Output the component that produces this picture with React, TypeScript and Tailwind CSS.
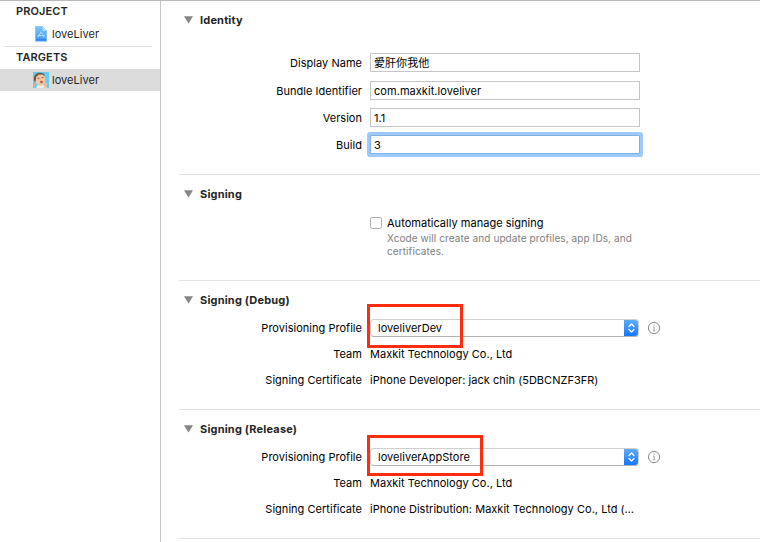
import type { ReactNode } from 'react';

function Section({ title, className, children }: { title: string; className: string; children: ReactNode }) {
  return (
    <section className={`flex flex-col border-b border-[#e3e3e3] ${className}`}>
      <h2 className="flex h-[18px] shrink-0 items-center pl-[5px] font-bold tracking-[0.18px] text-[#262626]">
        <svg className="mr-[7px] h-2 w-[9px]" viewBox="0 0 9 8">
          <path d="M0 0.3H9L4.5 7.6Z" fill="#868686" />
        </svg>
        {title}
      </h2>
      {children}
    </section>
  );
}

function Row({ label, className, children }: { label: string; className: string; children: ReactNode }) {
  return (
    <div className={`flex shrink-0 items-center ${className}`}>
      <div className="mr-2 w-[183px] shrink-0 text-right">{label}</div>
      {children}
    </div>
  );
}

function Field({ value, focused }: { value: string; focused?: boolean }) {
  return (
    <div
      className={`flex h-[19px] w-[270px] items-center border bg-white pl-[3px] tracking-[0.05px] ${
        focused ? 'rounded-[1px] border-[#7fb0e6] shadow-[0_0_0_3px_#9dcafb]' : 'border-[#c5c5c5]'
      }`}
    >
      {value}
    </div>
  );
}

function ProfileSelect({ value, mark }: { value: string; mark: string }) {
  return (
    <div className="relative flex items-center">
      <div className="flex h-[18px] w-[269px] items-center overflow-hidden rounded-[4px] border border-[#cfcfcf] border-b-[#b3b3b3] pl-[7px]">
        <span className="flex-1">{value}</span>
        <span className="-my-px -mr-px flex h-[18px] w-[15px] items-center justify-center bg-gradient-to-b from-[#63aefb] to-[#0a73fb]">
          <svg className="h-[10px] w-[7px]" viewBox="0 0 7 10" fill="none" stroke="#fff" strokeWidth="1.2" strokeLinecap="round" strokeLinejoin="round">
            <path d="M1 3.5 3.5 1 6 3.5M1 6.5 3.5 9 6 6.5" />
          </svg>
        </span>
      </div>
      <svg className="ml-2 h-[14px] w-[14px]" viewBox="0 0 14 14" fill="none">
        <circle cx="7" cy="7" r="5.6" stroke="#8b8b8b" />
        <path d="M6.2 6H7.1V9.8M6 9.8H8.2" stroke="#8b8b8b" strokeWidth="0.8" />
        <circle cx="7" cy="4.1" r="0.7" fill="#8b8b8b" />
      </svg>
      <div className={`absolute -left-[3px] border-3 border-[#ff2d10] ${mark}`} />
    </div>
  );
}

function DocumentIcon() {
  return (
    <svg className="mr-[5px] h-4 w-3" viewBox="0 0 12 16">
      <defs>
        <linearGradient id="doc" x1="0" y1="0" x2="0" y2="1">
          <stop offset="0" stopColor="#7cc5fb" />
          <stop offset="1" stopColor="#3f98f3" />
        </linearGradient>
      </defs>
      <path d="M0.4 0.5H7.6L11.7 4.8V15.3H0.4Z" fill="url(#doc)" stroke="#75b8ed" strokeWidth="0.6" />
      <path d="M7.6 0.5V4.8H11.7Z" fill="#c3e6ff" />
      <path d="M3 11.3 6.1 5.8 9.2 11.3M2.4 9.6H9.8" fill="none" stroke="#a9ddff" strokeWidth="1" />
      <path d="M1 13.8H11" stroke="#2784e8" strokeWidth="1.2" />
    </svg>
  );
}

function FaceIcon() {
  return (
    <svg className="mr-[3px] h-4 w-4" viewBox="0 0 16 16">
      <rect width="16" height="16" fill="#62cdf4" />
      <path d="M3 16 5 12.5 11 13 14 16Z" fill="#e9eff0" />
      <ellipse cx="7.2" cy="7.8" rx="5.2" ry="6.2" transform="rotate(-12 7.2 7.8)" fill="#f3c6a4" />
      <path d="M1.4 9.5C-0.2 4.5 2.6 0.7 6.8 0.8 10 0.8 11.4 2 11.9 4L9.3 2.5 5.4 2.7 3.2 4.9 2.7 9.6Z" fill="#79523a" />
      <path d="M4.5 6.6 6.5 6.1M8.7 5.5 10.5 5.7" stroke="#6b4a3b" strokeWidth="0.8" />
      <path d="M7 6.8 7.6 8.2" stroke="#d89b78" strokeWidth="0.8" />
      <ellipse cx="8.5" cy="10" rx="1.6" ry="1.2" fill="#bd6555" />
      <path d="M10.2 15.8 12.2 10.8 14.2 11.4 13.3 15.8Z" fill="#f2bd9a" />
      <path d="M1 11 3 12.6 2.6 15 1 14Z" fill="#e9ad89" />
    </svg>
  );
}

function Signing({ title, profile, mark, certificate }: { title: string; profile: string; mark: string; certificate: string }) {
  return (
    <Section title={title} className="h-[129px] pt-[10px]">
      <Row label="Provisioning Profile" className="mt-[10px] h-[18px]">
        <ProfileSelect value={profile} mark={mark} />
      </Row>
      <Row label="Team" className="mt-2 h-[18px]">Maxkit Technology Co., Ltd</Row>
      <Row label="Signing Certificate" className="mt-2 h-[18px]">{certificate}</Row>
    </Section>
  );
}

export default function App() {
  return (
    <div className="flex h-[542px] w-[760px] overflow-hidden border-t border-[#b9b9b9] bg-white font-['Inter','Noto_Sans_CJK_TC',sans-serif] text-[11px] leading-[14px] tracking-[0.025px] whitespace-nowrap text-black">
      <aside className="flex w-[161px] shrink-0 flex-col border-r border-[#c6c6c6] text-[#262626]">
        <div className="flex h-[20px] items-center pl-4 font-semibold tracking-[0.1px]">PROJECT</div>
        <div className="flex h-[25px] items-center pl-[35px]"><DocumentIcon />loveLiver</div>
        <div className="mr-2 ml-[5px] h-px bg-[#dedede]" />
        <div className="flex h-[22px] items-center pb-[2px] pl-4 font-semibold tracking-[0.1px]">TARGETS</div>
        <div className="flex h-[22px] items-center bg-[#dcdcdc] pl-[33px]"><FaceIcon />loveLiver</div>
      </aside>
      <main className="flex flex-1 flex-col pl-[18px]">
        <Section title="Identity" className="h-[174px] pt-[10px]">
          <Row label="Display Name" className="mt-6 h-[19px]"><Field value="愛肝你我他" /></Row>
          <Row label="Bundle Identifier" className="mt-[9px] h-[19px]"><Field value="com.maxkit.loveliver" /></Row>
          <Row label="Version" className="mt-2 h-[19px]"><Field value="1.1" /></Row>
          <Row label="Build" className="mt-2 h-[19px]"><Field value="3" focused /></Row>
        </Section>
        <Section title="Signing" className="h-[106px] pt-[10px]">
          <div className="mt-[14px] ml-[191px] flex items-start">
            <span className="mr-[5px] h-3 w-3 rounded-[2.5px] border border-[#aaa]" />
            <div>
              <div className="-mt-px">Automatically manage signing</div>
              <p className="mt-[2px] text-[10px] leading-[13px] tracking-[0.09px] text-[#808080]">
                Xcode will create and update profiles, app IDs, and<br />certificates.
              </p>
            </div>
          </div>
        </Section>
        <Signing title="Signing (Debug)" profile="loveliverDev" mark="-top-[15px] h-[44px] w-[96px]" certificate="iPhone Developer: jack chih (5DBCNZF3FR)" />
        <Signing title="Signing (Release)" profile="loveliverAppStore" mark="-top-[13px] h-[41px] w-[116px]" certificate="iPhone Distribution: Maxkit Technology Co., Ltd (…" />
      </main>
    </div>
  );
}
